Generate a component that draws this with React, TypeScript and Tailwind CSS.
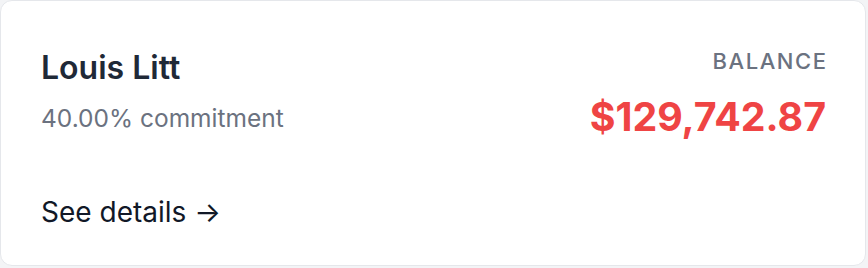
export default function App() {
  return (
    <div className="w-[868px] h-[268px] bg-gray-100" style={{ fontFamily: "Inter, sans-serif" }}>
      <div className="w-[866px] h-[266px] bg-white border border-gray-200 rounded-xl pl-10 pr-[39px] pt-[49px] flex flex-col">
        <div className="flex justify-between items-start">
          <div className="flex flex-col mt-[2px]">
            <h2 className="text-[32px] leading-[32px] font-semibold text-[#1f2937]">Louis Litt</h2>
            <p className="text-[24.5px] leading-[24px] text-[#6b7280] mt-[22px]">40.00% commitment</p>
          </div>
          <div className="flex flex-col items-end">
            <span className="text-[22px] leading-[22px] font-medium tracking-[0.07em] -mr-[1.5px] text-[#6b7280]">BALANCE</span>
            <span className="text-[39.3px] leading-[40px] font-bold text-[#ef4444] mt-[25px]">$129,742.87</span>
          </div>
        </div>
        <a href="#" className="mt-[61px] text-[28px] leading-[28px] text-[#111827] flex items-center gap-2 self-start">
          See details <span>→</span>
        </a>
      </div>
    </div>
  );
}
